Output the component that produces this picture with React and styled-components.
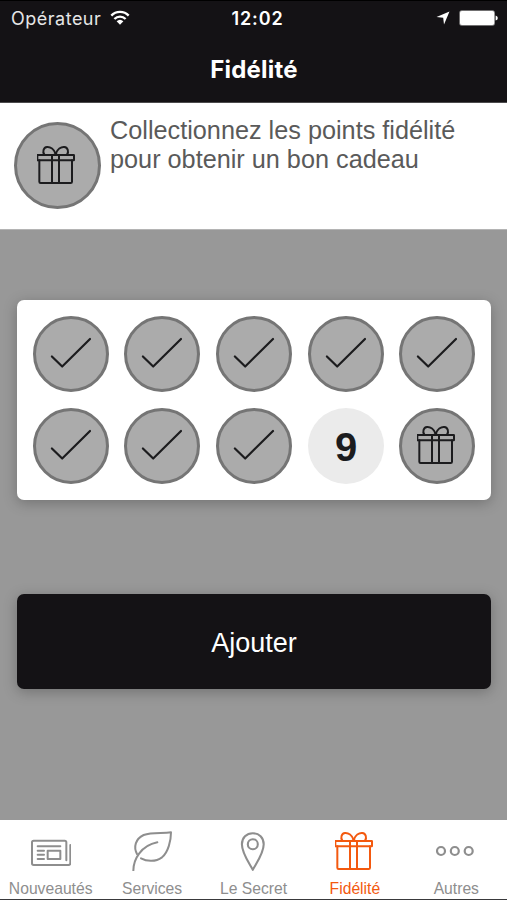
import React from 'react'
import styled, { createGlobalStyle } from 'styled-components'

const GlobalStyle = createGlobalStyle`
  * {
    box-sizing: border-box;
  }

  body {
    margin: 0;
    font-family: "Liberation Sans", Arial, sans-serif;
  }
`

const Screen = styled.div`
  width: 507px;
  height: 900px;
  display: flex;
  flex-direction: column;
  overflow: hidden;
  background-color: #989898;
`

const Header = styled.header`
  height: 103px;
  border-top: 1px solid #000;
  border-bottom: 1px solid #4c4b4d;
  background-color: #141215;
  color: #FFF;
  font-family: Inter, Roboto, sans-serif;
`

const StatusBar = styled.div`
  height: 34px;
  padding: 0 9px 0 11px;
  display: grid;
  grid-template-columns: 1fr auto 1fr;
  align-items: center;
  font-size: 18px;
`

const StatusGroup = styled.div`
  display: flex;
  align-items: center;
  justify-content: ${ props => props.$end ? 'flex-end' : 'flex-start' };
  gap: 9px;
  color: #E6E6E6;
`

const Carrier = styled.span`
  letter-spacing: .5px;
`

const Time = styled.span`
  padding-left: 6px;
  font-weight: 600;
  letter-spacing: .9px;
`

const Title = styled.h1`
  margin: 0;
  padding-left: 1px;
  height: 66px;
  line-height: 69px;
  text-align: center;
  font-size: 24px;
  font-weight: 700;
  letter-spacing: .2px;
`

const Intro = styled.section`
  height: 126px;
  padding: 19px 14px;
  display: flex;
  align-items: flex-start;
  gap: 9px;
  background-color: #FFF;
`

const IntroText = styled.p`
  margin: -6px 0 0;
  color: #5A5A5A;
  font-size: 25.25px;
  line-height: 29px;
  white-space: nowrap;
`

const Stamp = styled.div`
  width: ${ props => props.$size }px;
  height: ${ props => props.$size }px;
  flex: none;
  display: flex;
  align-items: center;
  justify-content: center;
  border-radius: 50%;
  border: ${ props => props.$empty ? 'none' : '3px solid #757575' };
  background-color: ${ props => props.$empty ? '#EBEBEB' : '#ABABAB' };
  color: #1C1C1E;
  font-size: 40px;
  line-height: 46px;
  padding: ${ props => props.$empty ? '2px 0 0 1px' : '0' };
  font-weight: bold;

  svg {
    margin: 0 ${ props => props.$size > 80 ? '2px' : '0' } 2px 0;
  }
`

const Content = styled.main`
  flex: 1;
  padding: 70px 16px 0 17px;
  border-top: 1px solid #b4b4b4;
  display: flex;
  flex-direction: column;
  gap: 94.5px;
`

const Card = styled.section`
  height: 199.5px;
  padding: 16px 15.8px 16px 15.5px;
  display: grid;
  grid-template-columns: repeat(5, 76px);
  grid-template-rows: repeat(2, 76px);
  justify-content: space-between;
  row-gap: 15.5px;
  background-color: #FFF;
  border-radius: 7px;
  box-shadow: 0 3px 14px rgba(0, 0, 0, .25);
`

const AddButton = styled.button`
  height: 95px;
  padding: 4px 0 0;
  border: none;
  border-radius: 7px;
  background-color: #141215;
  color: #FFF;
  font-family: inherit;
  font-size: 27px;
  box-shadow: 0 3px 14px rgba(0, 0, 0, .25);
`

const TabBar = styled.nav`
  height: 80px;
  display: grid;
  grid-template-columns: repeat(5, 1fr);
  background-color: #FFF;
  border-bottom: 1px solid #39393b;
`

const Tab = styled.div`
  padding-top: 11px;
  display: flex;
  flex-direction: column;
  align-items: center;
  color: ${ props => props.$active ? '#F3590F' : '#8E8E8E' };
`

const TabLabel = styled.span`
  margin-top: 9px;
  font-size: 15.7px;
  line-height: 18px;
  white-space: nowrap;
`

const Icon = styled.svg`
  display: block;
  flex: none;
  fill: none;
  stroke: currentColor;
  stroke-linecap: round;
  stroke-linejoin: round;
`

const GiftIcon = () => (
  <Icon width="40" height="40" viewBox="1 -3 120 120" strokeWidth="6">
    <rect x="2" y="27" width="110" height="16" rx="1" />
    <path d="M8 43V107Q8 111 12 111H102Q106 111 106 107V43M46 27V111M67 27V111" />
    <path d="M57 24C52 10 41 2 31 3C20 4 17 18 23 26M57 24C62 10 73 2 83 3C94 4 97 18 91 26M57 24L53 26M57 24L61 26" />
  </Icon>
)

const CheckIcon = () => (
  <Icon width="42" height="34" viewBox="0 0 42 34" strokeWidth="2.2">
    <path d="M1.9 20.5L12.2 30.5L40 3" />
  </Icon>
)

const NewsIcon = () => (
  <Icon width="40" height="40" viewBox="93 63 120 120" strokeWidth="6">
    <path d="M199 151V97Q199 92 194 92H101Q96 92 96 97V160Q96 165 101 165H205Q211 165 211 160V105" />
    <path d="M113 109H181M113 122H132M113 134H132M113 147H132" />
    <rect x="143" y="122" width="38" height="25" />
  </Icon>
)

const LeafIcon = () => (
  <Icon width="40" height="40" viewBox="398 64 120 120" strokeWidth="6">
    <path d="M413 133C402 112 408 88 433 76C458 66 489 72 515 68C515 92 507 127 488 143C467 159 440 154 425 146" />
    <path d="M402 183C402 150 424 108 474 98" />
  </Icon>
)

const PinIcon = () => (
  <Icon width="40" height="40" viewBox="0 0 40 40" strokeWidth="2.1">
    <path d="M19.8 38.8C16.5 32.5 8.9 22.5 8.9 13.3C8.9 6.6 13.5 2.2 19.8 2.2S30.7 6.6 30.7 13.3C30.7 22.5 23.1 32.5 19.8 38.8Z" />
    <circle cx="19.8" cy="13.2" r="5" />
  </Icon>
)

const MoreIcon = () => (
  <Icon width="40" height="40" viewBox="0 0 40 40" strokeWidth="2.2">
    <circle cx="5" cy="20" r="4" />
    <circle cx="18.8" cy="20" r="4" />
    <circle cx="32.7" cy="20" r="4" />
  </Icon>
)

const WifiIcon = () => (
  <Icon width="20" height="16" viewBox="0 0 20 16" strokeWidth="2.3">
    <path stroke="#FFF" strokeLinecap="butt" d="M1.3 5.6C6 .6 14 .6 18.7 5.6M4.4 9C7.5 5.8 12.5 5.8 15.6 9" />
    <path fill="#FFF" stroke="none" d="M6.6 11.2Q10 8.2 13.4 11.2L10 14.8Z" />
  </Icon>
)

const LocationIcon = () => (
  <Icon width="14" height="14" viewBox="0 0 14 14" strokeWidth="0">
    <path fill="#FFF" d="M13.5 .5L8 13.5L7.2 6.8L.5 6Z" />
  </Icon>
)

const BatteryIcon = () => (
  <Icon width="39" height="16" viewBox="0 0 39 16" strokeWidth="0">
    <rect x=".3" y=".3" width="35.6" height="15.4" rx="2.5" fill="#909090" />
    <rect x="1" y="1" width="34.2" height="14" rx="2" fill="#FFF" />
    <path fill="#FFF" d="M36.6 5.4Q38.8 6 38.8 8T36.6 10.6Z" />
  </Icon>
)

const stamps = [1, 2, 3, 4, 5, 6, 7, 8, 9, 10]
const collected = 8

const tabs = [
  { label: 'Nouveautés', icon: NewsIcon },
  { label: 'Services', icon: LeafIcon },
  { label: 'Le Secret', icon: PinIcon },
  { label: 'Fidélité', icon: GiftIcon, active: true },
  { label: 'Autres', icon: MoreIcon }
]

const renderStamp = number => {
  if (number === stamps.length) {
    return <Stamp key={ number } $size={ 76 }><GiftIcon /></Stamp>
  }
  if (number <= collected) {
    return <Stamp key={ number } $size={ 76 }><CheckIcon /></Stamp>
  }
  return <Stamp key={ number } $size={ 76 } $empty>{ number }</Stamp>
}

export default function App() {
  return (
    <Screen>
      <GlobalStyle />
      <Header>
        <StatusBar>
          <StatusGroup>
            <Carrier>Opérateur</Carrier>
            <WifiIcon />
          </StatusGroup>
          <Time>12:02</Time>
          <StatusGroup $end>
            <LocationIcon />
            <BatteryIcon />
          </StatusGroup>
        </StatusBar>
        <Title>Fidélité</Title>
      </Header>
      <Intro>
        <Stamp $size={ 87 }><GiftIcon /></Stamp>
        <IntroText>
          Collectionnez les points fidélité<br />
          pour obtenir un bon cadeau
        </IntroText>
      </Intro>
      <Content>
        <Card>{ stamps.map(renderStamp) }</Card>
        <AddButton>Ajouter</AddButton>
      </Content>
      <TabBar>
        { tabs.map(({ label, icon: TabIcon, active }) => (
          <Tab key={ label } $active={ active }>
            <TabIcon />
            <TabLabel>{ label }</TabLabel>
          </Tab>
        )) }
      </TabBar>
    </Screen>
  )
}
